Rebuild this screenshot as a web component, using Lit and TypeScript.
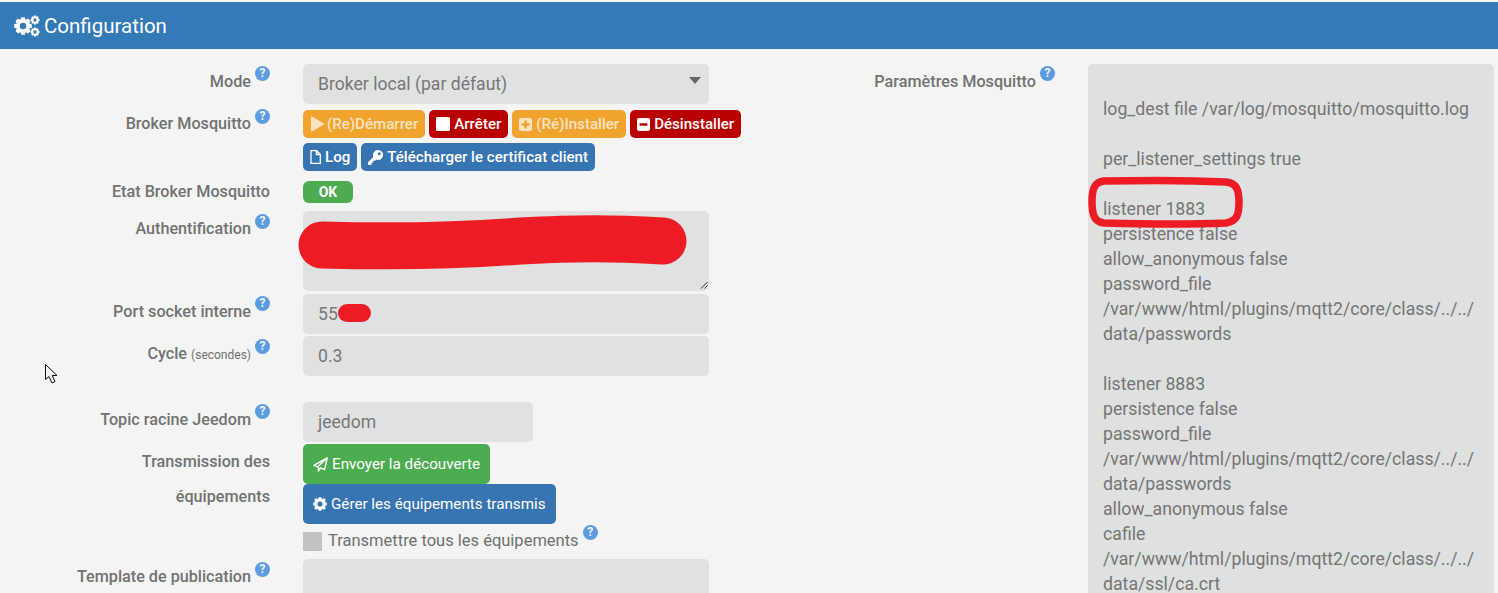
import { LitElement, html, css, svg } from "lit";
import { customElement } from "lit/decorators.js";

const gearPath = (cx: number, cy: number, r: number, teeth = 8) => {
  const pts: string[] = [];
  const outer = r, inner = r * 0.76;
  for (let i = 0; i < teeth; i++) {
    const a = (i / teeth) * Math.PI * 2;
    const w = Math.PI / teeth;
    const p = (rad: number, ang: number) => `${(cx + rad * Math.cos(ang)).toFixed(2)} ${(cy + rad * Math.sin(ang)).toFixed(2)}`;
    pts.push(p(inner, a - w * 0.95), p(outer, a - w * 0.5), p(outer, a + w * 0.5), p(inner, a + w * 0.95));
  }
  const hole = r * 0.36;
  return `M${pts.join("L")}Z M${cx + hole} ${cy}a${hole} ${hole} 0 1 0 ${-2 * hole} 0a${hole} ${hole} 0 1 0 ${2 * hole} 0Z`;
};

const i = {
  cogs: html`<svg class="cogs" viewBox="0 0 26 22" fill="#fff"><path fill-rule="evenodd" d=${gearPath(9, 11, 9)}/><path fill-rule="evenodd" d=${gearPath(21, 5, 4.6)}/><path fill-rule="evenodd" d=${gearPath(21, 17, 4.6)}/></svg>`,
  play: html`<svg class="ic play" viewBox="0 0 14 17" fill="currentColor"><path d="M0 1.5C0 .6.7.3 1.4.7L13.4 7.6c.7.4.7 1.4 0 1.8L1.4 16.3C.7 16.7 0 16.4 0 15.5Z"/></svg>`,
  stop: html`<svg class="ic i14" viewBox="0 0 14 14" fill="currentColor"><rect width="14" height="14" rx="1.5"/></svg>`,
  plus: html`<svg class="ic i13" viewBox="0 0 13 13"><path fill="currentColor" fill-rule="evenodd" d="M2 0h9a2 2 0 0 1 2 2v9a2 2 0 0 1-2 2H2a2 2 0 0 1-2-2V2a2 2 0 0 1 2-2ZM5.2 2.6v2.6H2.6v2.6h2.6v2.6h2.6V7.8h2.6V5.2H7.8V2.6Z"/></svg>`,
  minus: html`<svg class="ic i13" viewBox="0 0 13 13"><path fill="currentColor" fill-rule="evenodd" d="M2 0h9a2 2 0 0 1 2 2v9a2 2 0 0 1-2 2H2a2 2 0 0 1-2-2V2a2 2 0 0 1 2-2ZM2.6 5.2v2.6h7.8V5.2Z"/></svg>`,
  file: html`<svg class="ic file" viewBox="0 0 11 14" fill="none" stroke="currentColor" stroke-width="1.3"><path d="M1 .7h5.6L10.3 4.3v9H1ZM6.4.9v3.6h3.8"/></svg>`,
  key: html`<svg class="ic i15" viewBox="0 0 15 15"><path fill="currentColor" fill-rule="evenodd" d="M10 0a5 5 0 1 1-1.9 9.6L7 10.8H5.3v1.7H3.6V14.2L2.8 15H.5L0 14.5v-2.2L5.4 6.9A5 5 0 0 1 10 0Zm1.2 2.2a1.5 1.5 0 1 0 0 3 1.5 1.5 0 0 0 0-3Z"/></svg>`,
  plane: html`<svg class="ic i15" viewBox="0 0 15 15" fill="none" stroke="currentColor" stroke-width="1.4" stroke-linejoin="round"><path d="M14.2.8 .9 8.4l3.6 1.5L14.2.8 11.6 12.6 7.4 10.9 5.4 14V10.2"/></svg>`,
  cog: html`<svg class="ic i14" viewBox="0 0 14 14" fill="currentColor"><path fill-rule="evenodd" d=${gearPath(7, 7, 7)}/></svg>`,
};

const help = html`<span class="help">?</span>`;

const confText = `
log_dest file /var/log/mosquitto/mosquitto.log

per_listener_settings true

listener 1883
persistence false
allow_anonymous false
password_file
/var/www/html/plugins/mqtt2/core/class/../../
data/passwords

listener 8883
persistence false
password_file
/var/www/html/plugins/mqtt2/core/class/../../
data/passwords
allow_anonymous false
cafile
/var/www/html/plugins/mqtt2/core/class/../../
data/ssl/ca.crt
`;

@customElement("app-root")
export class AppRoot extends LitElement {
  static styles = css`
    :host { display: block; position: relative; height: 593px; overflow: hidden; background: #f4f4f4; color: #707070; font-family: Roboto, "Liberation Sans", sans-serif; }
    .bar { margin-top: 2px; height: 47px; background: #337ab7; color: #fff; display: flex; align-items: center; gap: 4px; padding-left: 14px; font-size: 20.5px; }
    .cogs { width: 26px; height: 22px; }
    .main { display: flex; padding-top: 15px; align-items: flex-start; }
    .left { width: 709px; flex: none; }
    .row { display: grid; grid-template-columns: 270px 406px; column-gap: 33px; }
    .lab { display: flex; justify-content: flex-end; align-items: flex-start; font-size: 16.2px; font-weight: 500; line-height: 20px; color: #727272; white-space: nowrap; }
    .lab > .t { margin-top: 5.5px; }
    .lab small { font-size: 12px; font-weight: 400; }
    .p1 { padding-top: 1.5px; }
    .p1 > .t { margin-top: 6.5px; }
    .p2 { padding-top: 2.5px; }
    .pm { margin-top: -1.5px; }
    .plain { padding-top: 1px; }
    .plain > .t { margin-top: 0; }
    .help { display: inline-flex; flex: none; align-items: center; justify-content: center; width: 15px; height: 15px; border-radius: 50%; background: #5b9bdf; color: #f4f4f4; font-size: 12px; font-weight: 700; line-height: 15px; margin-left: 4px; }
    .ctl { height: 40px; background: #e0e1e1; border-radius: 5px; box-sizing: border-box; padding-left: 15px; display: flex; align-items: center; font-size: 17.6px; color: #777; position: relative; }
    .caret { position: absolute; right: 8px; top: 13px; width: 0; height: 0; border-left: 6px solid transparent; border-right: 6px solid transparent; border-top: 7px solid #666; }
    .btns { display: flex; gap: 4px; height: 28px; }
    .btn { display: inline-flex; align-items: center; gap: 4px; height: 28px; padding: 0 7px; border-radius: 5px; font-size: 15.1px; font-weight: 500; color: #fff; box-sizing: border-box; white-space: nowrap; }
    .ic { flex: none; }
    .i13 { width: 13px; height: 13px; }
    .i14 { width: 14px; height: 14px; }
    .i15 { width: 15px; height: 15px; }
    .play { width: 13px; height: 16px; margin-left: 1px; margin-right: -1px; }
    .file { width: 11px; height: 14px; }
    .orange { background: #f0a32f; color: #fbe3c0; }
    .red { background: #b90000; }
    .blue { background: #3774b2; }
    .green { background: #4cad50; }
    .tall { height: 40px; padding: 0 10px; gap: 4px; width: max-content; font-weight: 400; font-size: 15.2px; }
    .badge { display: inline-flex; align-items: center; justify-content: center; width: 50px; height: 22px; background: #4cad50; color: #fff; border-radius: 6px; font-size: 14px; font-weight: 700; }
    .r-broker { margin-top: 6px; }
    .r-log { margin-top: 5px; }
    .r-etat { margin-top: 10px; }
    .r-auth { margin-top: 8px; }
    .r-port { margin-top: 3px; }
    .r-cycle { margin-top: 2px; }
    .r-topic { margin-top: 26px; }
    .r-disc { margin-top: 2px; }
    .r-tmpl { margin-top: 9px; }
    .two { display: block; text-align: right; line-height: 35px; }
    .auth { height: 80px; overflow: hidden; }
    .grip { position: absolute; right: 1px; bottom: 2px; width: 8px; height: 8px; }
    .narrow { width: 230px; }
    .tmpl { height: 60px; }
    .stack { display: flex; flex-direction: column; }
    .check { display: flex; align-items: flex-start; gap: 6px; margin-top: 8px; font-size: 16.5px; height: 18px; line-height: 18px; }
    .check .txt { display: flex; align-items: flex-start; }
    .check .help { margin-top: -7px; }
    .box { width: 19px; height: 19px; background: #c2c2c2; flex: none; }
    .right { display: grid; grid-template-columns: 346px 406px; flex: none; column-gap: 33px; }
    .conf { margin: 0; background: #dfe0e0; border-radius: 5px; padding: 8px 15px; height: 560px; box-sizing: border-box; font: 400 17.7px/25px Roboto, "Liberation Sans", sans-serif; color: #757575; white-space: pre; overflow: hidden; }
    .ink { position: absolute; inset: 0; width: 1498px; height: 593px; pointer-events: none; }
  `;

  render() {
    return html`
      <div class="bar">${i.cogs}<span>Configuration</span></div>
      <div class="main">
        <div class="left">
          <div class="row">
            <div class="lab p1"><span class="t">Mode</span>${help}</div>
            <div class="ctl">Broker local (par défaut)<span class="caret"></span></div>
          </div>
          <div class="row r-broker">
            <div class="lab pm"><span class="t">Broker Mosquitto</span>${help}</div>
            <div>
              <div class="btns">
                <span class="btn orange">${i.play}(Re)Démarrer</span>
                <span class="btn red">${i.stop}Arrêter</span>
                <span class="btn orange">${i.plus}(Ré)Installer</span>
                <span class="btn red">${i.minus}Désinstaller</span>
              </div>
              <div class="btns r-log">
                <span class="btn blue">${i.file}Log</span>
                <span class="btn blue">${i.key}Télécharger le certificat client</span>
              </div>
            </div>
          </div>
          <div class="row r-etat">
            <div class="lab plain"><span class="t">Etat Broker Mosquitto</span></div>
            <div><span class="badge">OK</span></div>
          </div>
          <div class="row r-auth">
            <div class="lab p2"><span class="t">Authentification</span>${help}</div>
            <div class="ctl auth">
              <svg class="grip" viewBox="0 0 8 8" stroke="#333" stroke-width="1"><path d="M1 7.5 7.5 1M4.5 7.5 7.5 4.5"/></svg>
            </div>
          </div>
          <div class="row r-port">
            <div class="lab p1"><span class="t">Port socket interne</span>${help}</div>
            <div class="ctl">55</div>
          </div>
          <div class="row r-cycle">
            <div class="lab p2"><span class="t">Cycle <small>(secondes)</small></span>${help}</div>
            <div class="ctl">0.3</div>
          </div>
          <div class="row r-topic">
            <div class="lab p1"><span class="t">Topic racine Jeedom</span>${help}</div>
            <div class="ctl narrow">jeedom</div>
          </div>
          <div class="row r-disc">
            <div class="lab two">Transmission des<br />équipements</div>
            <div class="stack">
              <span class="btn green tall">${i.plane}Envoyer la découverte</span>
              <span class="btn blue tall">${i.cog}Gérer les équipements transmis</span>
              <div class="check"><span class="box"></span><span class="txt">Transmettre tous les équipements${help}</span></div>
            </div>
          </div>
          <div class="row r-tmpl">
            <div class="lab p2"><span class="t">Template de publication</span>${help}</div>
            <div class="ctl tmpl"></div>
          </div>
        </div>
        <div class="right">
          <div class="lab p1"><span class="t">Paramètres Mosquitto</span>${help}</div>
          <pre class="conf">${confText}</pre>
        </div>
      </div>
      <svg class="ink" viewBox="0 0 1498 593" fill="none">
        ${svg`
        <path d="M322 245C400 247 470 245 520 241 580 238 610 238 663 241" stroke="#ed1c24" stroke-width="47" stroke-linecap="round"/>
        <path d="M347 313H362" stroke="#ed1c24" stroke-width="18" stroke-linecap="round"/>
        <path d="M1104 181C1150 180 1190 180 1226 182 1236 183 1239 189 1239 202 1239 215 1237 221 1226 223 1180 225 1140 224 1104 223 1095 222 1092 216 1092 202 1092 188 1095 182 1104 181Z" stroke="#ed1c24" stroke-width="7.5"/>
        <path d="M45.5 364.5V379.5L49 376.5 52 383 55 381.5 52.2 375.5H57Z" fill="#f4f4f4" stroke="#111" stroke-width="1"/>
        `}
      </svg>
    `;
  }
}
